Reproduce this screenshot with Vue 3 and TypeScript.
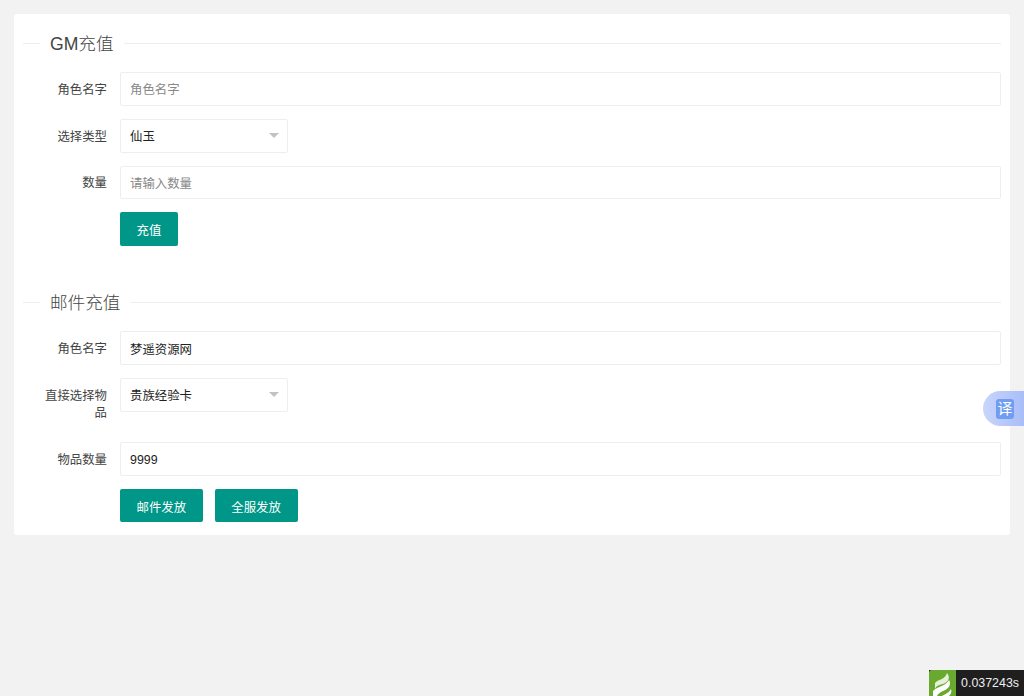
<script setup lang="ts">
interface Row {
  label: string
  kind: 'input' | 'select'
  value?: string
  placeholder?: string
}
const first: Row[] = [
  { label: '角色名字', kind: 'input', placeholder: '角色名字' },
  { label: '选择类型', kind: 'select', value: '仙玉' },
  { label: '数量', kind: 'input', placeholder: '请输入数量' },
]
const second: Row[] = [
  { label: '角色名字', kind: 'input', value: '梦遥资源网' },
  { label: '直接选择物品', kind: 'select', value: '贵族经验卡' },
  { label: '物品数量', kind: 'input', value: '9999' },
]
const sections = [
  { title: 'GM充值', rows: first, buttons: ['充值'] },
  { title: '邮件充值', rows: second, buttons: ['邮件发放', '全服发放'] },
]
</script>

<template>
  <div class="page">
    <main class="card">
      <section v-for="s in sections" :key="s.title" class="section">
        <div class="legend">
          <span class="legend-text">{{ s.title }}</span>
        </div>
        <div v-for="r in s.rows" :key="r.label" class="row">
          <label class="label">{{ r.label }}</label>
          <input
            v-if="r.kind === 'input'"
            class="input"
            type="text"
            :value="r.value"
            :placeholder="r.placeholder"
          />
          <div v-else class="select">
            <span>{{ r.value }}</span>
            <i class="caret"></i>
          </div>
        </div>
        <div class="actions">
          <button v-for="b in s.buttons" :key="b" class="btn" type="button">{{ b }}</button>
        </div>
      </section>
    </main>

    <div class="translate">
      <span class="translate-icon">译</span>
    </div>

    <div class="timer">
      <svg class="timer-logo" width="27" height="26" viewBox="0 0 27 26">
        <path d="M3 0H27V26H0V3Q0 0 3 0Z" fill="#6aa92f" />
        <path d="M6 13C9 9 16 10 18 3C22 8 19 12 14 14C10 15 7 16 6 19Z" fill="#e4f0d8" />
        <path d="M4 21C8 16 16 17 20 10C23 15 19 19 14 21C11 22 9 24 8 26H4Z" fill="#ffffff" />
        <path d="M13 26C16 24 20 23 22 19C23 22 22 24 20 26Z" fill="#ffffff" />
      </svg>
      <span class="timer-text">0.037243s</span>
    </div>
  </div>
</template>

<style scoped>
.page {
  position: relative;
  min-height: 696px;
  background: #f2f2f2;
  padding: 14px;
  box-sizing: border-box;
  overflow: hidden;
  font-family: "Liberation Sans", "Noto Sans CJK SC", sans-serif;
  font-size: 12.4px;
  color: #444;
}
.card {
  background: #fff;
  border-radius: 3px;
  padding: 15px 9px 13px;
  display: flex;
  flex-direction: column;
  gap: 42px;
}
.legend {
  height: 28px;
  display: flex;
  align-items: center;
  margin-bottom: 15px;
  gap: 10px;
}
.legend::before {
  content: "";
  width: 17px;
  height: 1px;
  background: #eeeeee;
}
.legend::after {
  content: "";
  flex: 1;
  height: 1px;
  background: #eeeeee;
}
.legend-text {
  padding-top: 2px;
  font-size: 17.6px;
  font-weight: 300;
  line-height: 26px;
  color: #444;
}
.row {
  display: flex;
  align-items: flex-start;
  margin-bottom: 13px;
}
.label {
  flex: none;
  box-sizing: border-box;
  width: 97px;
  padding: 9.775px 13px 7.075px;
  line-height: 17px;
  text-align: right;
}
.input {
  flex: 1;
  min-width: 0;
  height: 33.75px;
  box-sizing: border-box;
  border: 1px solid #eeeeee;
  border-radius: 2px;
  padding: 2px 9px 0;
  font: inherit;
  color: #222;
  outline: none;
  background: #fff;
}
.input::placeholder {
  color: #888;
  opacity: 1;
}
.select {
  flex: none;
  width: 168px;
  height: 33.75px;
  box-sizing: border-box;
  border: 1px solid #eeeeee;
  border-radius: 2px;
  padding: 1px 9px 0;
  display: flex;
  align-items: center;
  justify-content: space-between;
  color: #222;
}
.caret {
  width: 0;
  height: 0;
  margin-top: -2px;
  margin-right: -1px;
  border-style: solid;
  border-width: 5px 5px 0;
  border-color: #c2c2c2 transparent transparent;
}
.actions {
  display: flex;
  gap: 12px;
  padding-left: 97px;
}
.btn {
  width: auto;
  height: 33.75px;
  padding: 2px 16.6px 0;
  border: 0;
  border-radius: 2px;
  background: #009688;
  color: #fff;
  font: inherit;
}
.translate {
  position: absolute;
  right: 0;
  top: 391px;
  width: 41px;
  height: 35px;
  border-radius: 18px 0 0 18px;
  background: linear-gradient(90deg, #c9d5fb, #a9bdf8);
  display: flex;
  align-items: center;
  padding-left: 13px;
  box-sizing: border-box;
}
.translate-icon {
  width: 18px;
  height: 20px;
  border-radius: 3px;
  background: #6f9df2;
  color: #fff;
  font-size: 15px;
  line-height: 20px;
  text-align: center;
}
.timer {
  position: absolute;
  right: 0;
  bottom: 0;
  display: flex;
  height: 26px;
  background: #1f1f1f;
}
.timer-logo {
  display: block;
}
.timer-text {
  padding: 0 5px;
  line-height: 26px;
  font-size: 12.4px;
  color: #eee;
}
</style>
